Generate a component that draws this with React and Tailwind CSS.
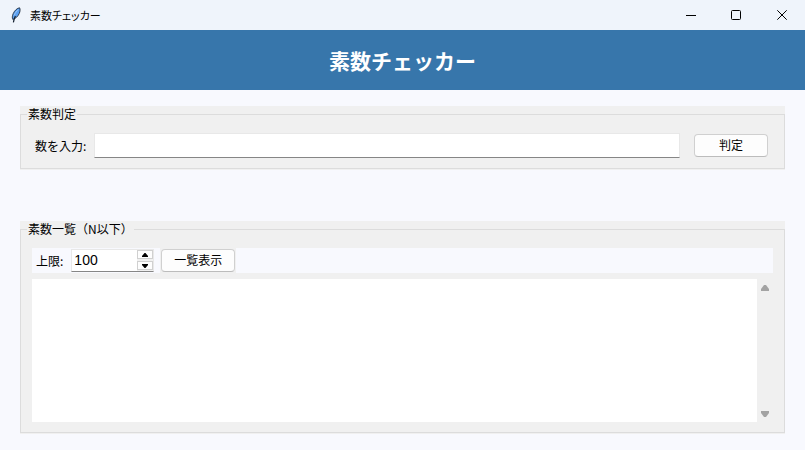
import React, { useState } from "react";

const listPrimes = (limit) => {
    const primes = [];
    for (let n = 2; n <= limit; n++) {
        if (primes.every((p) => n % p !== 0)) primes.push(n);
    }
    return primes;
};

function FeatherIcon() {
    return (
        <svg width="10" height="16" viewBox="0 0 10 16" aria-hidden="true">
            <path
                d="M8.6 0.8C6.4 1 3.6 3.4 2.2 6.6C1.2 9 1 11 1.8 12.4C4.4 11.8 7 9.4 8.2 6.6C9.2 4.4 9.4 2.2 8.6 0.8Z"
                fill="#5a9ff0"
                stroke="#14202e"
                strokeWidth="0.8"
            />
            <path d="M7.4 2.6C5.6 4 4 6.2 3.2 8.4" fill="none" stroke="#a9cdf6" strokeWidth="0.8" />
            <path d="M4.4 9C3.4 11 2.8 13 2.4 15.4" fill="none" stroke="#14202e" strokeWidth="1.2" />
        </svg>
    );
}

function TitleBar() {
    return (
        <div className="flex h-[30px] items-center bg-[#eff4fb] pb-px pl-[11px] text-black">
            <FeatherIcon />
            <span className="ml-[9px] flex-1 text-[11px] leading-4 [font-feature-settings:'palt']">
                素数チェッカー
            </span>
            <button type="button" aria-label="最小化" className="flex h-7 w-[45px] items-center justify-center">
                <svg width="10" height="10" viewBox="0 0 10 10">
                    <path d="M0 5.5H10" stroke="#000" />
                </svg>
            </button>
            <button type="button" aria-label="最大化" className="flex h-7 w-[46px] items-center justify-center">
                <svg width="10" height="10" viewBox="0 0 10 10">
                    <rect x="0.5" y="0.5" width="9" height="9" rx="1" fill="none" stroke="#000" />
                </svg>
            </button>
            <button type="button" aria-label="閉じる" className="flex h-7 w-[46px] items-center justify-center">
                <svg width="10" height="10" viewBox="0 0 10 10">
                    <path d="M0.3 0.3L9.7 9.7M9.7 0.3L0.3 9.7" stroke="#000" />
                </svg>
            </button>
        </div>
    );
}

function ScrollArrow({ up }) {
    return (
        <svg width="8" height="6" viewBox="0 0 8 6" aria-hidden="true">
            <path d={up ? "M3 0H5L8 4V6H0V4Z" : "M0 0H8V2L5 6H3L0 2Z"} fill="#a3a3a3" />
        </svg>
    );
}

function SpinArrow({ up }) {
    return (
        <svg width="6" height="4" viewBox="0 0 6 4" aria-hidden="true">
            <path d={up ? "M2.5 0H3.5L6 3V4H0V3Z" : "M0 0H6V1L3.5 4H2.5L0 1Z"} fill="#000" />
        </svg>
    );
}

function PushButton({ children, onClick }) {
    return (
        <button
            type="button"
            onClick={onClick}
            className="h-[23px] w-[74px] rounded-[4px] border border-[#d0d0d0] border-b-[#bcbcbc] bg-[#fdfdfd] pb-px text-xs leading-4">
            {children}
        </button>
    );
}

function App() {
    const [number, setNumber] = useState("");
    const [result, setResult] = useState("");
    const [limit, setLimit] = useState("100");
    const [output, setOutput] = useState("");

    const checkNumber = () => {
        const n = Number(number);
        const prime = Number.isInteger(n) && listPrimes(n).includes(n);
        setResult(prime ? `${n} は素数です` : `${number} は素数ではありません`);
    };

    const step = (amount) => setLimit((value) => String(Number(value) + amount));

    return (
        <div className="flex min-h-screen flex-col bg-[#f8f9fe] font-['Noto_Sans_CJK_JP',sans-serif] text-black">
            <TitleBar />
            <header className="flex h-[60px] items-center justify-center bg-[#3776ab]">
                <h1 className="text-[21px] font-bold leading-8 text-white">素数チェッカー</h1>
            </header>
            <main className="px-5 py-4">
                <div className="bg-[#f0f0f0] pb-px">
                    <fieldset className="border border-[#dcdcdc] pb-[10px] pl-[14px] pr-4">
                        <legend className="-ml-2 px-px text-xs leading-4">素数判定</legend>
                        <div className="flex items-center pt-[11px]">
                            <label htmlFor="number" className="text-xs leading-4">
                                数を入力:
                            </label>
                            <input
                                id="number"
                                type="text"
                                value={number}
                                onChange={(e) => setNumber(e.target.value)}
                                className="ml-2 mr-[14px] h-[25px] min-w-0 flex-1 border border-[#e8e8e8] border-b-[#868686] bg-white px-1 text-sm outline-none"
                            />
                            <PushButton onClick={checkNumber}>判定</PushButton>
                        </div>
                    </fieldset>
                </div>

                <p className="flex h-[51px] items-center justify-center text-sm">{result}</p>

                <div className="bg-[#f0f0f0] pb-px">
                    <fieldset className="border border-[#dcdcdc] px-[11px] pb-[10px]">
                        <legend className="-ml-[5px] px-px text-xs leading-4">素数一覧（N以下）</legend>
                        <div className="mt-[11px] flex h-[25px] items-center bg-[#f8f9fe] pl-1">
                            <label htmlFor="limit" className="text-xs leading-4">
                                上限:
                            </label>
                            <div className="ml-2 mr-[6px] flex h-[23px] w-[83px] border border-[#e8e8e8] border-b-[#868686] bg-white">
                                <input
                                    id="limit"
                                    type="text"
                                    value={limit}
                                    onChange={(e) => setLimit(e.target.value)}
                                    className="min-w-0 flex-1 pb-[2px] pl-[2px] font-['Liberation_Sans',sans-serif] text-sm leading-5 outline-none"
                                />
                                <div className="flex w-4 flex-col justify-between bg-[#f0f0f0] pb-px">
                                    <button
                                        type="button"
                                        aria-label="増やす"
                                        onClick={() => step(1)}
                                        className="flex h-[9px] items-center justify-center border border-[#d0d0d0] bg-[#fdfdfd]">
                                        <SpinArrow up />
                                    </button>
                                    <button
                                        type="button"
                                        aria-label="減らす"
                                        onClick={() => step(-1)}
                                        className="flex h-[9px] items-center justify-center border border-[#d0d0d0] bg-[#fdfdfd]">
                                        <SpinArrow />
                                    </button>
                                </div>
                            </div>
                            <div className="flex bg-[#f0f0f0] p-px">
                                <PushButton onClick={() => setOutput(listPrimes(Number(limit)).join(", "))}>
                                    一覧表示
                                </PushButton>
                            </div>
                        </div>
                        <div className="mt-[6px] flex">
                            <textarea
                                aria-label="素数一覧"
                                value={output}
                                onChange={(e) => setOutput(e.target.value)}
                                className="h-[143px] min-w-0 flex-1 resize-none bg-white p-1 text-sm outline-none"
                            />
                            <div className="flex w-4 flex-col items-center justify-between pb-[5px] pt-[6px]">
                                <ScrollArrow up />
                                <ScrollArrow />
                            </div>
                        </div>
                    </fieldset>
                </div>
            </main>
        </div>
    );
}

export default App;
